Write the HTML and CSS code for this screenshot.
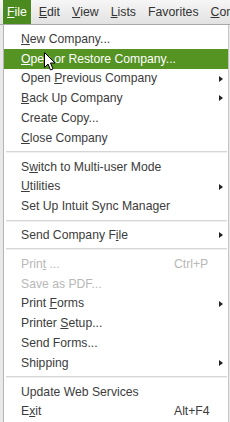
FILE: index.html
```html
<!DOCTYPE html>
<html>
<head>
<meta charset="utf-8">
<link rel="stylesheet" href="styles.css">
</head>
<body>
<div class="menubar">
  <span class="mb-item active"><u>F</u>ile</span>
  <span class="mb-item"><u>E</u>dit</span>
  <span class="mb-item"><u>V</u>iew</span>
  <span class="mb-item"><u>L</u>ists</span>
  <span class="mb-item">Favorites</span>
  <span class="mb-item"><u>C</u>ompany</span>
</div>
<div class="stage">
  <div class="menu">
    <div class="item"><span class="label"><u>N</u>ew Company...</span></div>
    <div class="item hl"><span class="label"><u>O</u>pen or Restore Company...</span></div>
    <div class="item"><span class="label">Open <u>P</u>revious Company</span><span class="arrow"></span></div>
    <div class="item"><span class="label"><u>B</u>ack Up Company</span><span class="arrow"></span></div>
    <div class="item"><span class="label">Create Copy...</span></div>
    <div class="item"><span class="label"><u>C</u>lose Company</span></div>
    <div class="sep"></div>
    <div class="item"><span class="label">S<u>w</u>itch to Multi-user Mode</span></div>
    <div class="item"><span class="label"><u>U</u>tilities</span><span class="arrow"></span></div>
    <div class="item"><span class="label">Set Up Intuit Sync Manager</span></div>
    <div class="sep"></div>
    <div class="item"><span class="label">Send Company F<u>i</u>le</span><span class="arrow"></span></div>
    <div class="sep"></div>
    <div class="item disabled"><span class="label">Prin<u>t</u> ...</span><span class="key">Ctrl+P</span></div>
    <div class="item disabled"><span class="label">Save as PDF...</span></div>
    <div class="item"><span class="label">Print <u>F</u>orms</span><span class="arrow"></span></div>
    <div class="item"><span class="label">Printer <u>S</u>etup...</span></div>
    <div class="item"><span class="label">Send Forms...</span></div>
    <div class="item"><span class="label">Shippin<u>g</u></span><span class="arrow"></span></div>
    <div class="sep"></div>
    <div class="item"><span class="label">Update Web Services</span></div>
    <div class="item"><span class="label">E<u>x</u>it</span><span class="key">Alt+F4</span></div>
  </div>
  <svg class="cursor" width="12" height="19" viewBox="0 0 12 19">
    <path d="M0.5 0.5 L0.5 15.5 L4 12 L6.5 18 L9 17 L6.5 11 L11 11 Z" fill="#ffffff" stroke="#000000" stroke-width="1" stroke-linejoin="miter"/>
  </svg>
</div>
</body>
</html>
```

FILE: styles.css
```css
html, body {
  margin: 0;
  padding: 0;
  width: 230px;
  height: 422px;
  overflow: hidden;
  background: #e9e9e9;
  font-family: "Liberation Sans", Arial, sans-serif;
  font-size: 12px;
  color: #3c3c3c;
}

u {
  text-decoration: underline;
  text-underline-offset: 1px;
}

.menubar {
  height: 24px;
  display: flex;
  align-items: stretch;
  gap: 4px;
  padding-left: 3px;
  background: linear-gradient(#f6f6f6, #e2e2e2);
  border-bottom: 1px solid #a9a9a9;
  white-space: nowrap;
  overflow: hidden;
}

.mb-item {
  display: flex;
  align-items: center;
  padding: 0 4px;
  color: #333333;
  font-size: 12.3px;
}

.mb-item.active {
  background: #4a8a1e;
  color: #ffffff;
}

.stage {
  position: relative;
  padding-left: 3px;
}

.menu {
  background: #ffffff;
  border-left: 1px solid #b4b4b4;
  border-right: 1px solid #c6c6c6;
  width: 224px;
  padding-top: 4px;
  height: 393px;
  box-sizing: content-box;
}

.item {
  height: 19.8px;
  display: flex;
  align-items: center;
  padding-left: 17px;
  position: relative;
  white-space: nowrap;
  font-size: 12.2px;
  color: #3c3c3c;
}

.item.hl {
  background: #559322;
  color: #ffffff;
}

.item.disabled {
  color: #b8b8b8;
}

.label {
  flex: 0 0 153px;
}

.arrow {
  position: absolute;
  left: 215px;
  top: 7px;
  width: 0;
  height: 0;
  border-top: 3px solid transparent;
  border-bottom: 3px solid transparent;
  border-left: 4px solid #222222;
}

.sep {
  height: 9px;
  display: flex;
  align-items: center;
  padding: 0 1px 0 2px;
}

.sep::before {
  content: "";
  display: block;
  flex: 1;
  height: 1px;
  background: #d6d6d6;
  border-bottom: 1px solid #f0f0f0;
}

.cursor {
  position: absolute;
  left: 44px;
  top: 27px;
}
```
